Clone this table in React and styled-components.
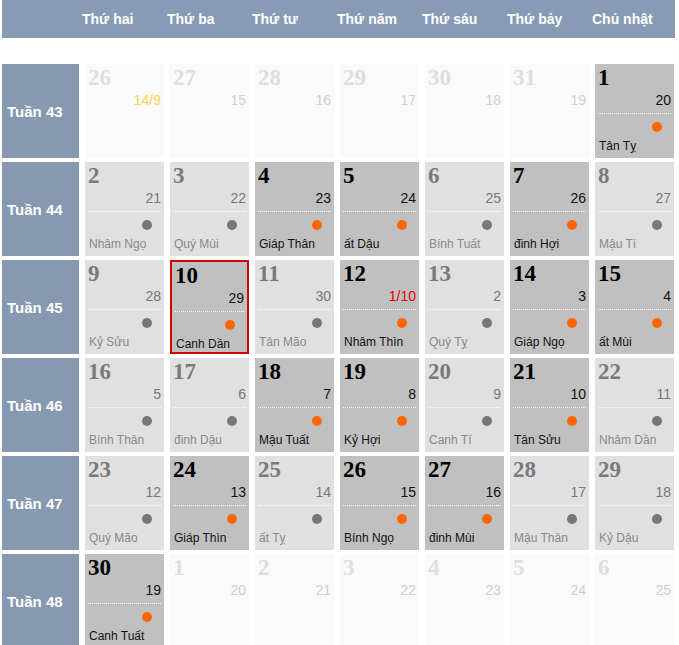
import React from "react";
import styled, { createGlobalStyle } from "styled-components";

const GlobalStyle = createGlobalStyle`
  body {
    margin: 0;
    background: #fff;
    font-family: "Liberation Sans", Arial, sans-serif;
  }
`;

const days = ["Thứ hai", "Thứ ba", "Thứ tư", "Thứ năm", "Thứ sáu", "Thứ bảy", "Chủ nhật"];

// [solar, lunar, can chi, kind (o = other month, l = light, d = good day), extra]
const weeks = [
  [43, [
    ["26", "14/9", "", "o", "yellow"], ["27", "15", "", "o"], ["28", "16", "", "o"],
    ["29", "17", "", "o"], ["30", "18", "", "o"], ["31", "19", "", "o"], ["1", "20", "Tân Tỵ", "d"],
  ]],
  [44, [
    ["2", "21", "Nhâm Ngọ", "l"], ["3", "22", "Quý Mùi", "l"], ["4", "23", "Giáp Thân", "d"],
    ["5", "24", "ất Dậu", "d"], ["6", "25", "Bính Tuất", "l"], ["7", "26", "đinh Hợi", "d"], ["8", "27", "Mậu Tí", "l"],
  ]],
  [45, [
    ["9", "28", "Kỷ Sửu", "l"], ["10", "29", "Canh Dần", "d", "sel"], ["11", "30", "Tân Mão", "l"],
    ["12", "1/10", "Nhâm Thìn", "d", "red"], ["13", "2", "Quý Tỵ", "l"], ["14", "3", "Giáp Ngọ", "d"], ["15", "4", "ất Mùi", "d"],
  ]],
  [46, [
    ["16", "5", "Bính Thân", "l"], ["17", "6", "đinh Dậu", "l"], ["18", "7", "Mậu Tuất", "d"],
    ["19", "8", "Kỷ Hợi", "d"], ["20", "9", "Canh Tí", "l"], ["21", "10", "Tân Sửu", "d"], ["22", "11", "Nhâm Dần", "l"],
  ]],
  [47, [
    ["23", "12", "Quý Mão", "l"], ["24", "13", "Giáp Thìn", "d"], ["25", "14", "ất Tỵ", "l"],
    ["26", "15", "Bính Ngọ", "d"], ["27", "16", "đinh Mùi", "d"], ["28", "17", "Mậu Thân", "l"], ["29", "18", "Kỷ Dậu", "l"],
  ]],
  [48, [
    ["30", "19", "Canh Tuất", "d"], ["1", "20", "", "o"], ["2", "21", "", "o"], ["3", "22", "", "o"],
    ["4", "23", "", "o"], ["5", "24", "", "o"], ["6", "25", "", "o"],
  ]],
];

const look = {
  o: { bg: "#fafafa", num: "#dedede", lunar: "#cfcfcf", name: "#ccc", dot: "transparent" },
  l: { bg: "#e0e0e0", num: "#7a7a7a", lunar: "#777", name: "#888", dot: "#777" },
  d: { bg: "#c0c0c0", num: "#000", lunar: "#111", name: "#111", dot: "#ff6600" },
};

const Page = styled.div`
  padding-left: 2px;
`;

const HeaderBar = styled.div`
  width: 673px;
  height: 38px;
  background: #889bb4;
  display: grid;
  grid-template-columns: 77px repeat(7, 79px);
  column-gap: 6px;
  align-items: center;
  margin-bottom: 26px;
`;

const DayLabel = styled.div`
  margin-left: -3px;
  color: #fff;
  font-weight: 700;
  font-size: 14px;
  white-space: nowrap;
`;

const Grid = styled.div`
  display: grid;
  grid-template-columns: 77px repeat(7, 79px);
  grid-auto-rows: 94px;
  column-gap: 6px;
  row-gap: 4px;
`;

const WeekCell = styled.div`
  background: #8699b1;
  color: #fff;
  font-weight: 700;
  font-size: 15px;
  display: flex;
  align-items: center;
  padding-left: 5px;
`;

const Cell = styled.div`
  box-sizing: border-box;
  height: 94px;
  padding: 2px 3px 0;
  background: ${(p) => look[p.$kind].bg};
  border: ${(p) => (p.$sel ? "2px solid #d40000" : "none")};
`;

const Head = styled.div`
  height: 47px;
  border-bottom: 1px dotted ${(p) => (p.$kind === "o" ? "transparent" : "#fff")};
`;

const Num = styled.div`
  font-family: "Liberation Serif", "Times New Roman", serif;
  font-weight: 700;
  font-size: 23px;
  line-height: 23px;
  color: ${(p) => look[p.$kind].num};
`;

const Lunar = styled.div`
  margin-top: 3px;
  text-align: right;
  font-size: 14px;
  line-height: 16px;
  color: ${(p) => (p.$tone === "yellow" ? "#f8d54e" : p.$tone === "red" ? "#e80000" : look[p.$kind].lunar)};
`;

const Mark = styled.div`
  display: flex;
  justify-content: flex-end;
  margin-top: 8px;
  height: 10px;
`;

const Dot = styled.span`
  width: 10px;
  height: 10px;
  border-radius: 50%;
  margin-right: 9px;
  background: ${(p) => look[p.$kind].dot};
`;

const Name = styled.div`
  margin-top: 7px;
  padding-left: 1px;
  font-size: 12px;
  line-height: 14px;
  white-space: nowrap;
  color: ${(p) => look[p.$kind].name};
`;

const DayCell = ({ day }) => {
  const [num, lunar, name, kind, extra] = day;
  return (
    <Cell $kind={kind} $sel={extra === "sel"}>
      <Head $kind={kind}>
        <Num $kind={kind}>{num}</Num>
        <Lunar $kind={kind} $tone={extra}>{lunar}</Lunar>
      </Head>
      {kind !== "o" && (
        <>
          <Mark>
            <Dot $kind={kind} />
          </Mark>
          <Name $kind={kind}>{name}</Name>
        </>
      )}
    </Cell>
  );
};

export default function App() {
  return (
    <Page>
      <GlobalStyle />
      <HeaderBar>
        <span />
        {days.map((d) => (
          <DayLabel key={d}>{d}</DayLabel>
        ))}
      </HeaderBar>
      <Grid>
        {weeks.map(([w, list]) => (
          <React.Fragment key={w}>
            <WeekCell>Tuần {w}</WeekCell>
            {list.map((day, i) => (
              <DayCell key={i} day={day} />
            ))}
          </React.Fragment>
        ))}
      </Grid>
    </Page>
  );
}
